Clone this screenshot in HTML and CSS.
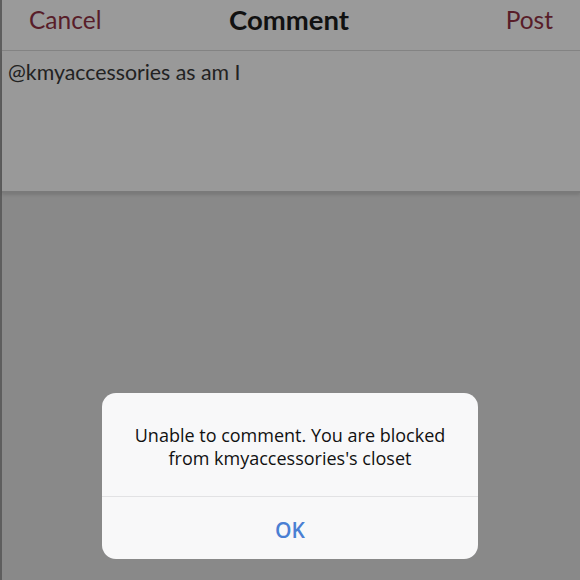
FILE: index.html
```html
<!DOCTYPE html>
<html lang="en">

<head>
    <meta charset="UTF-8" />
    <meta name="viewport" content="width=device-width, initial-scale=1.0" />
    <title>Comment</title>
    <link rel="stylesheet" href="styles.css">
</head>

<body>
    <div class="screen">
        <div class="nav">
            <span class="nav-btn">Cancel</span>
            <span class="nav-title">Comment</span>
            <span class="nav-btn nav-right">Post</span>
        </div>

        <div class="editor">
            <p class="editor-text">@kmyaccessories as am I</p>
        </div>

        <div class="backdrop">
            <div class="alert">
                <div class="alert-body">
                    Unable to comment. You are blocked<br>from kmyaccessories's closet
                </div>
                <div class="alert-action">OK</div>
            </div>
        </div>
    </div>
</body>

</html>
```

FILE: styles.css
```css
* {
    margin: 0;
    padding: 0;
    box-sizing: border-box;
}

body {
    font-family: 'Lato', 'Open Sans', sans-serif;
    background: #898989;
    width: 580px;
    height: 580px;
    overflow: hidden;
}

.screen {
    display: flex;
    flex-direction: column;
    height: 580px;
    border-left: 2px solid #5e5e5e;
}

.nav {
    display: grid;
    grid-template-columns: 1fr auto 1fr;
    align-items: center;
    height: 51px;
    padding: 0 27px 11px 27px;
    background: #9a9a9a;
    border-bottom: 1px solid #848484;
}

.nav-btn {
    color: #581d29;
    font-size: 24.5px;
}

.nav-right {
    text-align: right;
}

.nav-title {
    color: #111;
    font-size: 27.5px;
    font-weight: bold;
    padding-right: 4px;
}

.editor {
    height: 142px;
    background: #999;
    border-bottom: 2px solid #7a7a7a;
    box-shadow: 0 2px 3px rgba(0, 0, 0, 0.12);
    padding: 8px 6px;
}

.editor-text {
    color: #222;
    font-size: 21.3px;
}

.backdrop {
    flex: 1;
    display: flex;
    justify-content: center;
    align-items: flex-end;
    padding-bottom: 21px;
    padding-right: 2px;
}

.alert {
    width: 376px;
    background: #f8f8f9;
    border-radius: 14px;
    overflow: hidden;
}

.alert-body {
    height: 104px;
    padding-top: 31px;
    text-align: center;
    font-family: 'Open Sans', sans-serif;
    font-size: 18px;
    line-height: 23px;
    color: #111;
    border-bottom: 1px solid #e2e2e4;
}

.alert-action {
    height: 62px;
    display: flex;
    align-items: center;
    justify-content: center;
    padding-top: 4px;
    font-family: 'Open Sans', sans-serif;
    font-size: 21px;
    font-weight: 600;
    color: #4a7fd3;
}
```
